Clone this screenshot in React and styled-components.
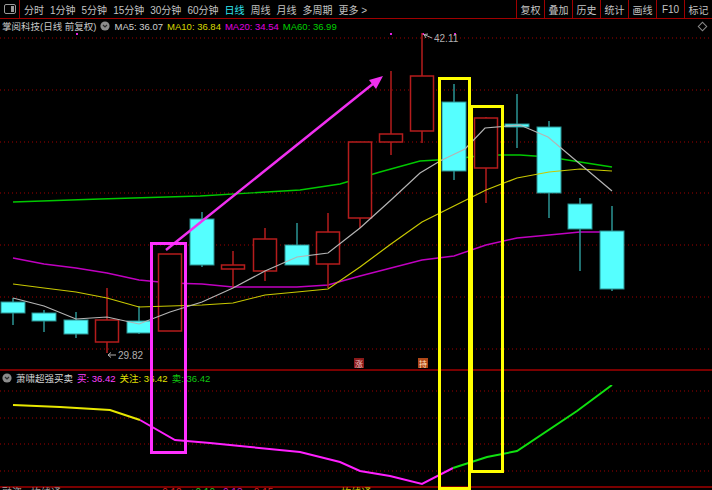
import React from "react"
import styled, { createGlobalStyle } from "styled-components"

const GlobalStyle = createGlobalStyle`
  html, body {
    margin: 0;
    padding: 0;
    background: #000;
    overflow: hidden;
  }
  body {
    font-family: "Liberation Sans", "Noto Sans CJK SC", sans-serif;
  }
`

const tabs = ["分时", "1分钟", "5分钟", "15分钟", "30分钟", "60分钟", "日线", "周线", "月线", "多周期", "更多 >"]
const tools = ["复权", "叠加", "历史", "统计", "画线", "F10", "标记"]

// [centerX, bodyTop, bodyBottom, wickTop, wickBottom, falling]
const candles = [
  [13, 302, 313, 298, 325, true],
  [44, 313, 321, 310, 332, true],
  [76, 320, 334, 312, 338, true],
  [107, 320, 342, 288, 353, false],
  [139, 321, 333, 306, 334, true],
  [170, 254, 331, 254, 331, false],
  [202, 219, 265, 212, 267, true],
  [233, 265, 269, 251, 288, false],
  [265, 239, 271, 228, 281, false],
  [297, 245, 265, 223, 265, true],
  [328, 232, 264, 213, 288, false],
  [360, 142, 218, 142, 228, false],
  [391, 134, 142, 71, 155, false],
  [422, 76, 131, 33, 143, false],
  [454, 102, 171, 84, 180, true],
  [486, 118, 168, 117, 203, false],
  [517, 124, 127, 94, 148, true],
  [549, 127, 193, 121, 218, true],
  [580, 204, 229, 198, 271, true],
  [612, 231, 289, 206, 291, true],
]

const ma5 = [[13, 298], [44, 306], [76, 319], [107, 317], [139, 324], [170, 312], [202, 302], [233, 288], [265, 271], [297, 257], [328, 253], [360, 228], [391, 200], [420, 173], [440, 161], [465, 149], [485, 128], [520, 125], [548, 137], [612, 191]]
const ma10 = [[13, 284], [44, 288], [76, 292], [107, 298], [139, 307], [170, 306], [202, 305], [233, 303], [265, 295], [297, 292], [328, 289], [360, 267], [391, 244], [422, 222], [454, 206], [486, 190], [517, 178], [549, 172], [580, 169], [612, 171]]
const ma20 = [[13, 258], [44, 264], [76, 268], [107, 273], [139, 280], [170, 283], [202, 284], [233, 287], [265, 287], [297, 287], [328, 285], [360, 276], [391, 268], [422, 260], [454, 256], [486, 245], [517, 238], [549, 235], [580, 232], [612, 232]]
const ma60 = [[13, 202], [100, 199], [200, 196], [300, 190], [340, 184], [380, 172], [420, 161], [454, 159], [486, 155], [520, 155], [549, 157], [580, 162], [612, 167]]

const subYellow = [[13, 405], [60, 407], [110, 410], [140, 420]]
const subMagenta = [[140, 420], [175, 440], [210, 443], [250, 447], [300, 452], [340, 462], [360, 471], [390, 476], [422, 484], [453, 468]]
const subGreen = [[453, 468], [487, 457], [517, 451], [577, 411], [612, 385]]

const mainGrid = [38, 90, 142, 193, 245, 297, 349]
const subGrid = [391, 418, 444, 471]

const pts = (list) => list.map((p) => p.join(",")).join(" ")

function PanelIcon() {
  return (
    <svg width="12" height="10" viewBox="0 0 12 10">
      <rect x="0.5" y="0.5" width="11" height="9" rx="1.5" fill="none" stroke="#9a9a9a" />
      <rect x="7" y="2" width="3" height="6" fill="#9a9a9a" />
    </svg>
  )
}

function ToggleDot() {
  return (
    <svg width="10" height="10" viewBox="0 0 10 10">
      <circle cx="5" cy="5" r="4.6" fill="#8c8c8c" />
      <path d="M3 4 L5 6 L7 4" fill="none" stroke="#2a2a2a" strokeWidth="1.2" />
    </svg>
  )
}

function Candle({ c }) {
  const [x, bt, bb, wt, wb, falling] = c
  if (falling) {
    return (
      <g>
        <line x1={x} x2={x} y1={wt} y2={wb} stroke="#2b9595" strokeWidth="1.5" />
        <rect x={x - 12} y={bt} width="24" height={Math.max(bb - bt, 2)} fill="#55ffff" stroke="#2a8f8f" strokeWidth="1" />
      </g>
    )
  }
  return (
    <g>
      {wt < bt && <line x1={x} x2={x} y1={wt} y2={bt} stroke="#b51c1c" strokeWidth="1.5" />}
      {wb > bb && <line x1={x} x2={x} y1={bb} y2={wb} stroke="#b51c1c" strokeWidth="1.5" />}
      <rect x={x - 11.5} y={bt} width="23" height={Math.max(bb - bt, 2)} fill="#000" stroke="#b51c1c" strokeWidth="1.5" />
    </g>
  )
}

function MainChart() {
  return (
    <ChartSvg width="712" height="336" viewBox="0 33 712 336">
      {mainGrid.map((y) => (
        <line key={y} x1="0" x2="712" y1={y} y2={y} stroke="#a00000" strokeDasharray="1 3" />
      ))}
      {[76, 390, 422, 454].map((x) => (
        <rect key={x} x={x} y="33" width="2" height="2" fill="#e020e0" />
      ))}
      <polyline points={pts(ma60)} fill="none" stroke="#00c800" strokeWidth="1.4" />
      <polyline points={pts(ma20)} fill="none" stroke="#c000c0" strokeWidth="1.4" />
      {candles.map((c) => (
        <Candle key={c[0]} c={c} />
      ))}
      <polyline points={pts(ma10)} fill="none" stroke="#c8c800" strokeWidth="1.2" />
      <polyline points={pts(ma5)} fill="none" stroke="#b4b4b4" strokeWidth="1.2" />
      <path d="M424 34.5 L432 38" stroke="#b0b0b0" strokeWidth="1" />
      <path d="M424 34.5 L426 38 M424 34.5 L428 34" stroke="#b0b0b0" strokeWidth="1" />
      <text x="434" y="42" fill="#b0b0b0" fontSize="10">42.11</text>
      <path d="M108 355 L116 355 M108 355 L111 352.5 M108 355 L111 357.5" stroke="#b0b0b0" strokeWidth="1" fill="none" />
      <text x="118" y="359" fill="#b0b0b0" fontSize="10">29.82</text>
      <rect x="354" y="358" width="10" height="10" fill="#8a1a1a" />
      <text x="359" y="366.5" fill="#f0c8c8" fontSize="8" textAnchor="middle">涨</text>
      <rect x="418" y="358" width="10" height="10" fill="#b04818" />
      <text x="423" y="366.5" fill="#ffe0c0" fontSize="8" textAnchor="middle">持</text>
    </ChartSvg>
  )
}

function SubChart() {
  return (
    <ChartSvg width="712" height="101" viewBox="0 385 712 101">
      {subGrid.map((y) => (
        <line key={y} x1="0" x2="712" y1={y} y2={y} stroke="#a00000" strokeDasharray="1 3" />
      ))}
      <polyline points={pts(subYellow)} fill="none" stroke="#e8e800" strokeWidth="2" />
      <polyline points={pts(subMagenta)} fill="none" stroke="#ff20ff" strokeWidth="2" />
      <polyline points={pts(subGreen)} fill="none" stroke="#10e010" strokeWidth="2" />
    </ChartSvg>
  )
}

function Annotations() {
  return (
    <Overlay width="712" height="490" viewBox="0 0 712 490">
      <line x1="166" y1="250" x2="374" y2="83" stroke="#f030f0" strokeWidth="2.5" />
      <polygon points="383,76 369,80 376,89" fill="#f030f0" />
      <rect x="151.5" y="243.5" width="34" height="209" fill="none" stroke="#ff30ff" strokeWidth="3" />
      <rect x="439.5" y="78.5" width="30" height="410" fill="none" stroke="#ffff00" strokeWidth="3" />
      <rect x="471.5" y="106.5" width="31" height="365" fill="none" stroke="#ffff00" strokeWidth="3" />
    </Overlay>
  )
}

export default function App() {
  return (
    <>
      <GlobalStyle />
      <Screen>
        <Toolbar>
          <MenuButton>
            <PanelIcon />
          </MenuButton>
          {tabs.map((t) => (
            <Tab key={t} $active={t === "日线"}>
              {t}
            </Tab>
          ))}
          <Spacer />
          {tools.map((t) => (
            <ToolButton key={t}>{t}</ToolButton>
          ))}
        </Toolbar>
        <MainPanel>
          <Legend>
            <LegendText $color="#c8c8c8">掌阅科技(日线 前复权)</LegendText>
            <ToggleDot />
            <LegendText $color="#d0d0d0">MA5: 36.07</LegendText>
            <LegendText $color="#d8d800">MA10: 36.84</LegendText>
            <LegendText $color="#e000e0">MA20: 34.54</LegendText>
            <LegendText $color="#00d000">MA60: 36.99</LegendText>
            <Spacer />
            <Diamond />
          </Legend>
          <MainChart />
        </MainPanel>
        <SubPanel>
          <Legend>
            <ToggleDot />
            <LegendText $color="#d8d8d8">萧啸超强买卖</LegendText>
            <LegendText $color="#ff40ff">买: 36.42</LegendText>
            <LegendText $color="#e0e000">关注: 36.42</LegendText>
            <LegendText $color="#10c810">卖: 36.42</LegendText>
          </Legend>
          <SubChart />
        </SubPanel>
        <StatusRow>
          <StatusText $color="#a0a0a0">融资 · 均线通</StatusText>
          <StatusText $color="#d02020" $gap="90px">-0.12</StatusText>
          <StatusText $color="#20c020">+0.10</StatusText>
          <StatusText $color="#c020c0">0.13</StatusText>
          <StatusText $color="#d02020">-0.15</StatusText>
          <StatusText $color="#c8c800" $gap="60px">均线通</StatusText>
        </StatusRow>
        <Annotations />
      </Screen>
    </>
  )
}

const Screen = styled.div`
  position: relative;
  width: 712px;
  height: 490px;
  overflow: hidden;
  background: #000;
  display: flex;
  flex-direction: column;
  color: #c8c8c8;
  font-size: 10px;
`

const Toolbar = styled.div`
  display: flex;
  align-items: stretch;
  height: 18px;
  flex-shrink: 0;
  border-bottom: 1px solid #a00000;
`

const MenuButton = styled.div`
  width: 19px;
  margin-right: 1px;
  display: flex;
  align-items: center;
  justify-content: center;
  border-right: 1px solid #a00000;
`

const Tab = styled.div`
  display: flex;
  align-items: center;
  padding: 0 3px;
  font-size: 10px;
  color: ${(p) => (p.$active ? "#30e6f0" : "#c4c4c4")};
  white-space: nowrap;
`

const Spacer = styled.div`
  flex: 1;
`

const ToolButton = styled.div`
  width: 27px;
  display: flex;
  align-items: center;
  justify-content: center;
  border-left: 1px solid #a00000;
  font-size: 10px;
  color: #c4c4c4;
`

const MainPanel = styled.div`
  display: flex;
  flex-direction: column;
  height: 350px;
  flex-shrink: 0;
  border-bottom: 2px solid #7a0000;
`

const SubPanel = styled.div`
  display: flex;
  flex-direction: column;
  height: 115px;
  flex-shrink: 0;
  border-bottom: 2px solid #7a0000;
`

const Legend = styled.div`
  display: flex;
  align-items: center;
  gap: 4px;
  height: 14px;
  padding: 0 6px 0 2px;
  flex-shrink: 0;
`

const LegendText = styled.span`
  color: ${(p) => p.$color};
  font-size: 9.5px;
  white-space: nowrap;
`

const Diamond = styled.div`
  width: 5px;
  height: 5px;
  border: 1px solid #8a8a8a;
  transform: rotate(45deg);
`

const ChartSvg = styled.svg`
  display: block;
  flex-shrink: 0;
`

const StatusRow = styled.div`
  display: flex;
  align-items: flex-start;
  height: 14px;
  gap: 8px;
  padding-left: 2px;
`

const StatusText = styled.span`
  color: ${(p) => p.$color};
  margin-left: ${(p) => p.$gap || "0"};
  font-size: 10px;
  line-height: 10px;
`

const Overlay = styled.svg`
  position: absolute;
  top: 0;
  left: 0;
  pointer-events: none;
`
